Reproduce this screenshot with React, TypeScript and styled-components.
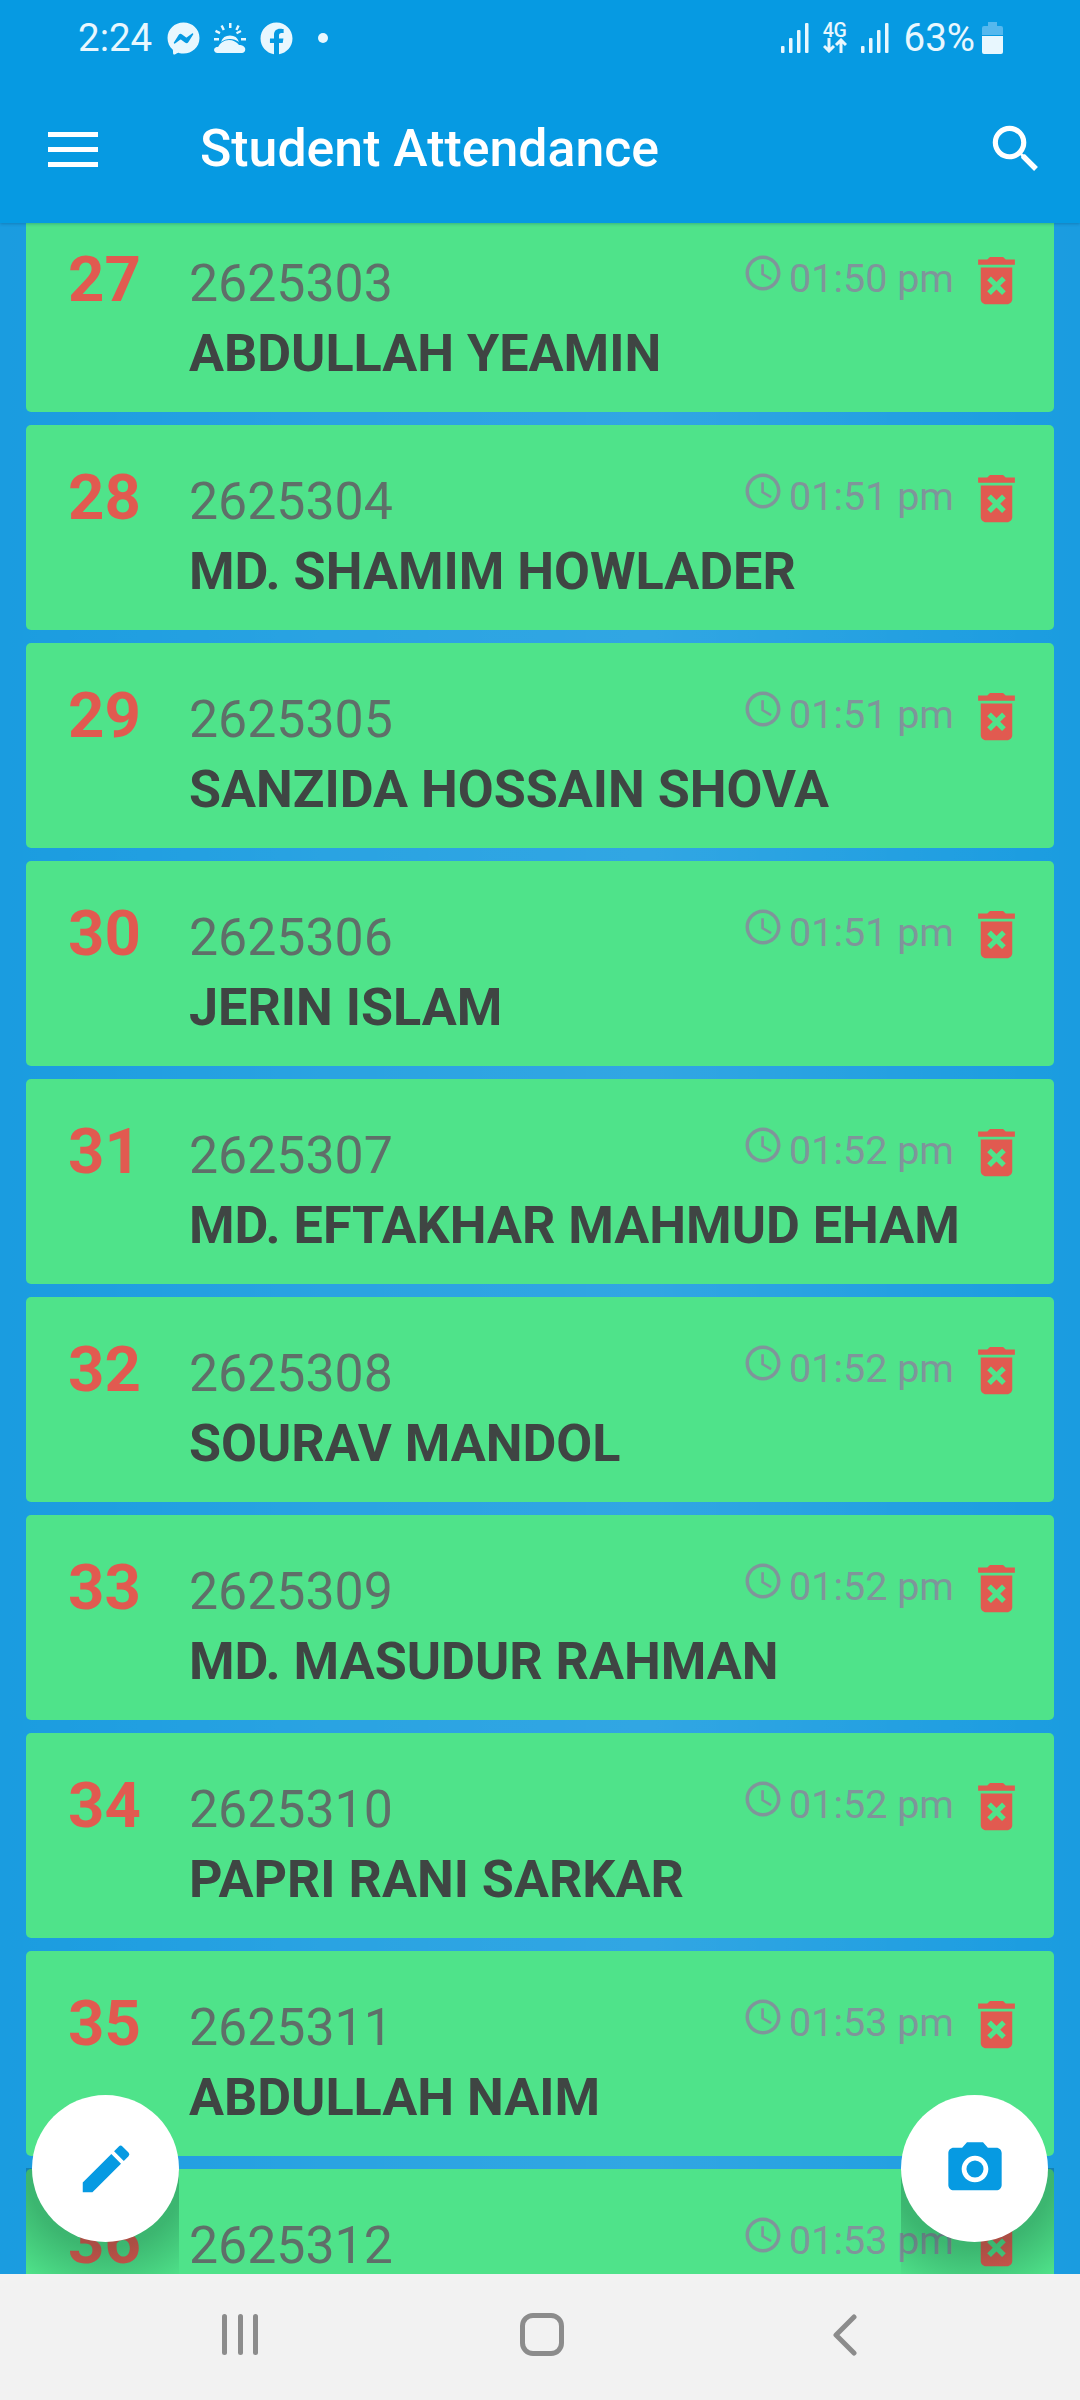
import React from "react";
import styled, { createGlobalStyle } from "styled-components";
import { FaFacebook, FaFacebookMessenger } from "react-icons/fa";
import { MdAccessTime, MdCameraAlt, MdDeleteForever, MdEdit, MdSearch } from "react-icons/md";

const Global = createGlobalStyle`
  html, body { margin: 0; padding: 0; background: #f2f2f2; }
  body { font-family: Roboto, "Noto Sans", sans-serif; }
  * { box-sizing: border-box; }
`;

const Page = styled.div`
  position: relative;
  width: 1080px;
  height: 2400px;
  overflow: hidden;
  display: flex;
  flex-direction: column;
`;

const Header = styled.header`
  position: relative;
  z-index: 2;
  flex: 0 0 223px;
  background: #069ae2;
  color: #fff;
  box-shadow: 0 1px 3px rgba(0, 60, 100, 0.3);
`;

const StatusBar = styled.div`
  height: 78px;
  padding: 22px 77px 0 78px;
  display: flex;
  align-items: flex-start;
  color: #e8f7fe;
`;

const Clock = styled.span`
  font-size: 38.5px;
  line-height: 32px;
  width: 89px;
`;

const StatusIcons = styled.div`
  display: flex;
  align-items: center;
  gap: 14px;
  height: 32px;
`;

const Dot = styled.span`
  width: 10px;
  height: 10px;
  border-radius: 50%;
  background: #e8f7fe;
  margin-left: 11px;
`;

const StatusRight = styled.div`
  margin-left: auto;
  display: flex;
  align-items: center;
  height: 32px;
`;

const NetBlock = styled.div`
  width: 24px;
  margin: 0 14px;
  display: flex;
  flex-direction: column;
  align-items: center;
`;

const NetLabel = styled.span`
  font-size: 19.5px;
  font-weight: 500;
  line-height: 15px;
  letter-spacing: -0.5px;
`;

const Percent = styled.span`
  font-size: 38.5px;
  line-height: 32px;
  margin-left: 15px;
  margin-right: 7px;
`;

const Toolbar = styled.div`
  height: 145px;
  padding: 0 33px 0 48px;
  display: flex;
  align-items: flex-start;
`;

const MenuIcon = styled.div`
  width: 50px;
  margin-top: 54px;
  display: flex;
  flex-direction: column;
  gap: 10px;
  & > span {
    display: block;
    height: 5px;
    background: #fff;
  }
`;

const Title = styled.h1`
  margin: 37px 0 0 102px;
  font-size: 51.8px;
  line-height: 68px;
  font-weight: 500;
  letter-spacing: 0;
`;

const SearchButton = styled.div`
  margin: 40px 0 0 auto;
  display: flex;
  color: #fff;
`;

const ListArea = styled.main`
  flex: 1;
  overflow: hidden;
  padding: 0 26px;
  background:
    linear-gradient(90deg, rgba(255,255,255,0) 0%, rgba(255,255,255,.07) 30%, rgba(255,255,255,.1) 60%, rgba(255,255,255,0) 100%),
    #1a9ce0;
  display: flex;
  flex-direction: column;
  gap: 13px;
`;

const Card = styled.article`
  flex: 0 0 205px;
  background: #4fe38a;
  border-radius: 5px;
  padding: 43px 0 0 42px;
  display: flex;
  align-items: flex-start;
  &:first-child { margin-top: -16px; }
`;

const CardInner = styled.div`
  position: relative;
  display: flex;
  flex: 1;
`;

const Num = styled.div`
  flex: 0 0 121px;
  color: #e15a50;
  font-size: 63.5px;
  font-weight: 700;
  line-height: 60px;
`;

const Info = styled.div`
  flex: 1;
  min-width: 0;
  padding-top: 10px;
`;

const RollNo = styled.div`
  color: #5f6f69;
  font-size: 51.8px;
  line-height: 48px;
`;

const Name = styled.div`
  color: #3f4543;
  font-size: 52.1px;
  font-weight: 700;
  line-height: 50px;
  margin-top: 21px;
  white-space: nowrap;
`;

const Meta = styled.div`
  position: absolute;
  top: 2px;
  right: 26px;
  display: flex;
  align-items: flex-start;
`;

const TimeText = styled.span`
  color: #7f959a;
  font-size: 39.5px;
  line-height: 44px;
  margin: 5px 0 0 5px;
  white-space: nowrap;
`;

const Trash = styled.span`
  color: #e15a50;
  display: flex;
  margin-left: 11px;
  margin-top: -3px;
`;

const Fab = styled.button<{ $side: "left" | "right" }>`
  position: absolute;
  z-index: 3;
  top: 2095px;
  ${(p) => (p.$side === "left" ? "left: 32px;" : "right: 32px;")}
  width: 147px;
  height: 147px;
  border: 0;
  border-radius: 50%;
  background: #fff;
  color: #069ae2;
  display: flex;
  align-items: center;
  justify-content: center;
  padding: 0;
`;

const FabShade = styled.div<{ $left: number }>`
  position: absolute;
  z-index: 1;
  top: 2168px;
  left: ${(p) => p.$left}px;
  width: 153px;
  height: 106px;
  background: radial-gradient(circle at ${(p) => (p.$left < 100 ? 80 : 73)}px 0, rgba(0, 40, 30, 0.28) 0, rgba(0, 40, 30, 0.24) 60%, rgba(0, 40, 30, 0) 100%);
  pointer-events: none;
`;

const BottomNav = styled.nav`
  position: relative;
  z-index: 2;
  flex: 0 0 126px;
  background: #f2f2f2;
  display: flex;
  color: #8c8c8c;
  padding: 40px 0 0 222px;
  align-items: flex-start;
`;

const NavRecent = styled.div`
  width: 36px;
  height: 41px;
  display: flex;
  justify-content: space-between;
  & > span {
    width: 5px;
    border-radius: 3px;
    background: #8c8c8c;
  }
`;

const NavHome = styled.div`
  width: 44px;
  height: 43px;
  margin: -1px 0 0 262px;
  border: 5px solid #8c8c8c;
  border-radius: 13px;
`;

const NavBack = styled.svg`
  margin-left: 269px;
  display: block;
`;

const Signal = () => (
  <svg width="28" height="30" viewBox="0 0 28 30" fill="#e8f7fe">
    <rect x="0" y="23" width="3.5" height="7" rx="1" />
    <rect x="8" y="15" width="3.5" height="15" rx="1" />
    <rect x="16" y="7" width="3.5" height="23" rx="1" />
    <rect x="24" y="0" width="3.5" height="30" rx="1" />
  </svg>
);

const Arrows = () => (
  <svg width="24" height="15" viewBox="0 0 24 15" fill="none" stroke="#e8f7fe" strokeWidth="3">
    <path d="M6 0v13M1 8l5 5 5-5" />
    <path d="M18 15V2M13 7l5-5 5 5" />
  </svg>
);

const Battery = () => (
  <svg width="21" height="32" viewBox="0 0 21 32">
    <path d="M6 0h9v4h4a2 2 0 0 1 2 2v7H0V6a2 2 0 0 1 2-2h4z" fill="#55b8ee" />
    <path d="M0 14h21v16a2 2 0 0 1-2 2H2a2 2 0 0 1-2-2z" fill="#e8f7fe" />
  </svg>
);

const Weather = () => (
  <svg width="32" height="30" viewBox="0 0 32 30" fill="#e8f7fe">
    <path d="M3 30a3 3 0 0 1-1-5.8c1-.3 2-.3 2.500-.7C6 20 10 17 15 17c4 0 8 2 10 5 1.500 0 5 .5 6 3 1 3-1 5-3 5z" />
    <path d="M7 19a9.500 9.500 0 0 1 18 0c-5-4-13-4-18 0z" />
    <path d="M15 0h2.500v5H15zM6.500 3l2.200-1 2.200 4.500-2.200 1zM23.500 2l2.200 1-2.200 4.500-2.200-1zM1 9l1-2.200 4.500 2.200-1 2.200zM26.500 7l1 2-4.500 2.200-1-2zM0 15h5v2.500H0zM27 15h5v2.500h-5z" />
  </svg>
);

const students = [
  { n: 27, id: "2625303", name: "ABDULLAH YEAMIN", t: "01:50 pm" },
  { n: 28, id: "2625304", name: "MD. SHAMIM HOWLADER", t: "01:51 pm" },
  { n: 29, id: "2625305", name: "SANZIDA HOSSAIN SHOVA", t: "01:51 pm" },
  { n: 30, id: "2625306", name: "JERIN ISLAM", t: "01:51 pm" },
  { n: 31, id: "2625307", name: "MD. EFTAKHAR MAHMUD EHAM", t: "01:52 pm" },
  { n: 32, id: "2625308", name: "SOURAV MANDOL", t: "01:52 pm" },
  { n: 33, id: "2625309", name: "MD. MASUDUR RAHMAN", t: "01:52 pm" },
  { n: 34, id: "2625310", name: "PAPRI RANI SARKAR", t: "01:52 pm" },
  { n: 35, id: "2625311", name: "ABDULLAH NAIM", t: "01:53 pm" },
  { n: 36, id: "2625312", name: "", t: "01:53 pm" },
];

export default function App() {
  return (
    <Page>
      <Global />
      <Header>
        <StatusBar>
          <Clock>2:24</Clock>
          <StatusIcons>
            <FaFacebookMessenger size={33} />
            <Weather />
            <FaFacebook size={33} />
            <Dot />
          </StatusIcons>
          <StatusRight>
            <Signal />
            <NetBlock>
              <NetLabel>4G</NetLabel>
              <Arrows />
            </NetBlock>
            <Signal />
            <Percent>63%</Percent>
            <Battery />
          </StatusRight>
        </StatusBar>
        <Toolbar>
          <MenuIcon>
            <span />
            <span />
            <span />
          </MenuIcon>
          <Title>Student Attendance</Title>
          <SearchButton>
            <MdSearch size={62} />
          </SearchButton>
        </Toolbar>
      </Header>
      <ListArea>
        {students.map((s) => (
          <Card key={s.n}>
            <CardInner>
              <Num>{s.n}</Num>
              <Info>
                <RollNo>{s.id}</RollNo>
                <Name>{s.name}</Name>
              </Info>
              <Meta>
                <MdAccessTime size={42} color="#7f959a" />
                <TimeText>{s.t}</TimeText>
                <Trash>
                  <MdDeleteForever size={63} />
                </Trash>
              </Meta>
            </CardInner>
          </Card>
        ))}
      </ListArea>
      <FabShade $left={26} />
      <FabShade $left={901} />
      <Fab $side="left">
        <MdEdit size={62} />
      </Fab>
      <Fab $side="right">
        <MdCameraAlt size={64} />
      </Fab>
      <BottomNav>
        <NavRecent>
          <span />
          <span />
          <span />
        </NavRecent>
        <NavHome />
        <NavBack width="24" height="42" viewBox="0 0 24 42" fill="none" stroke="#8c8c8c" strokeWidth="5" strokeLinecap="round" strokeLinejoin="round">
          <path d="M21 3L3 21l18 18" />
        </NavBack>
      </BottomNav>
    </Page>
  );
}
